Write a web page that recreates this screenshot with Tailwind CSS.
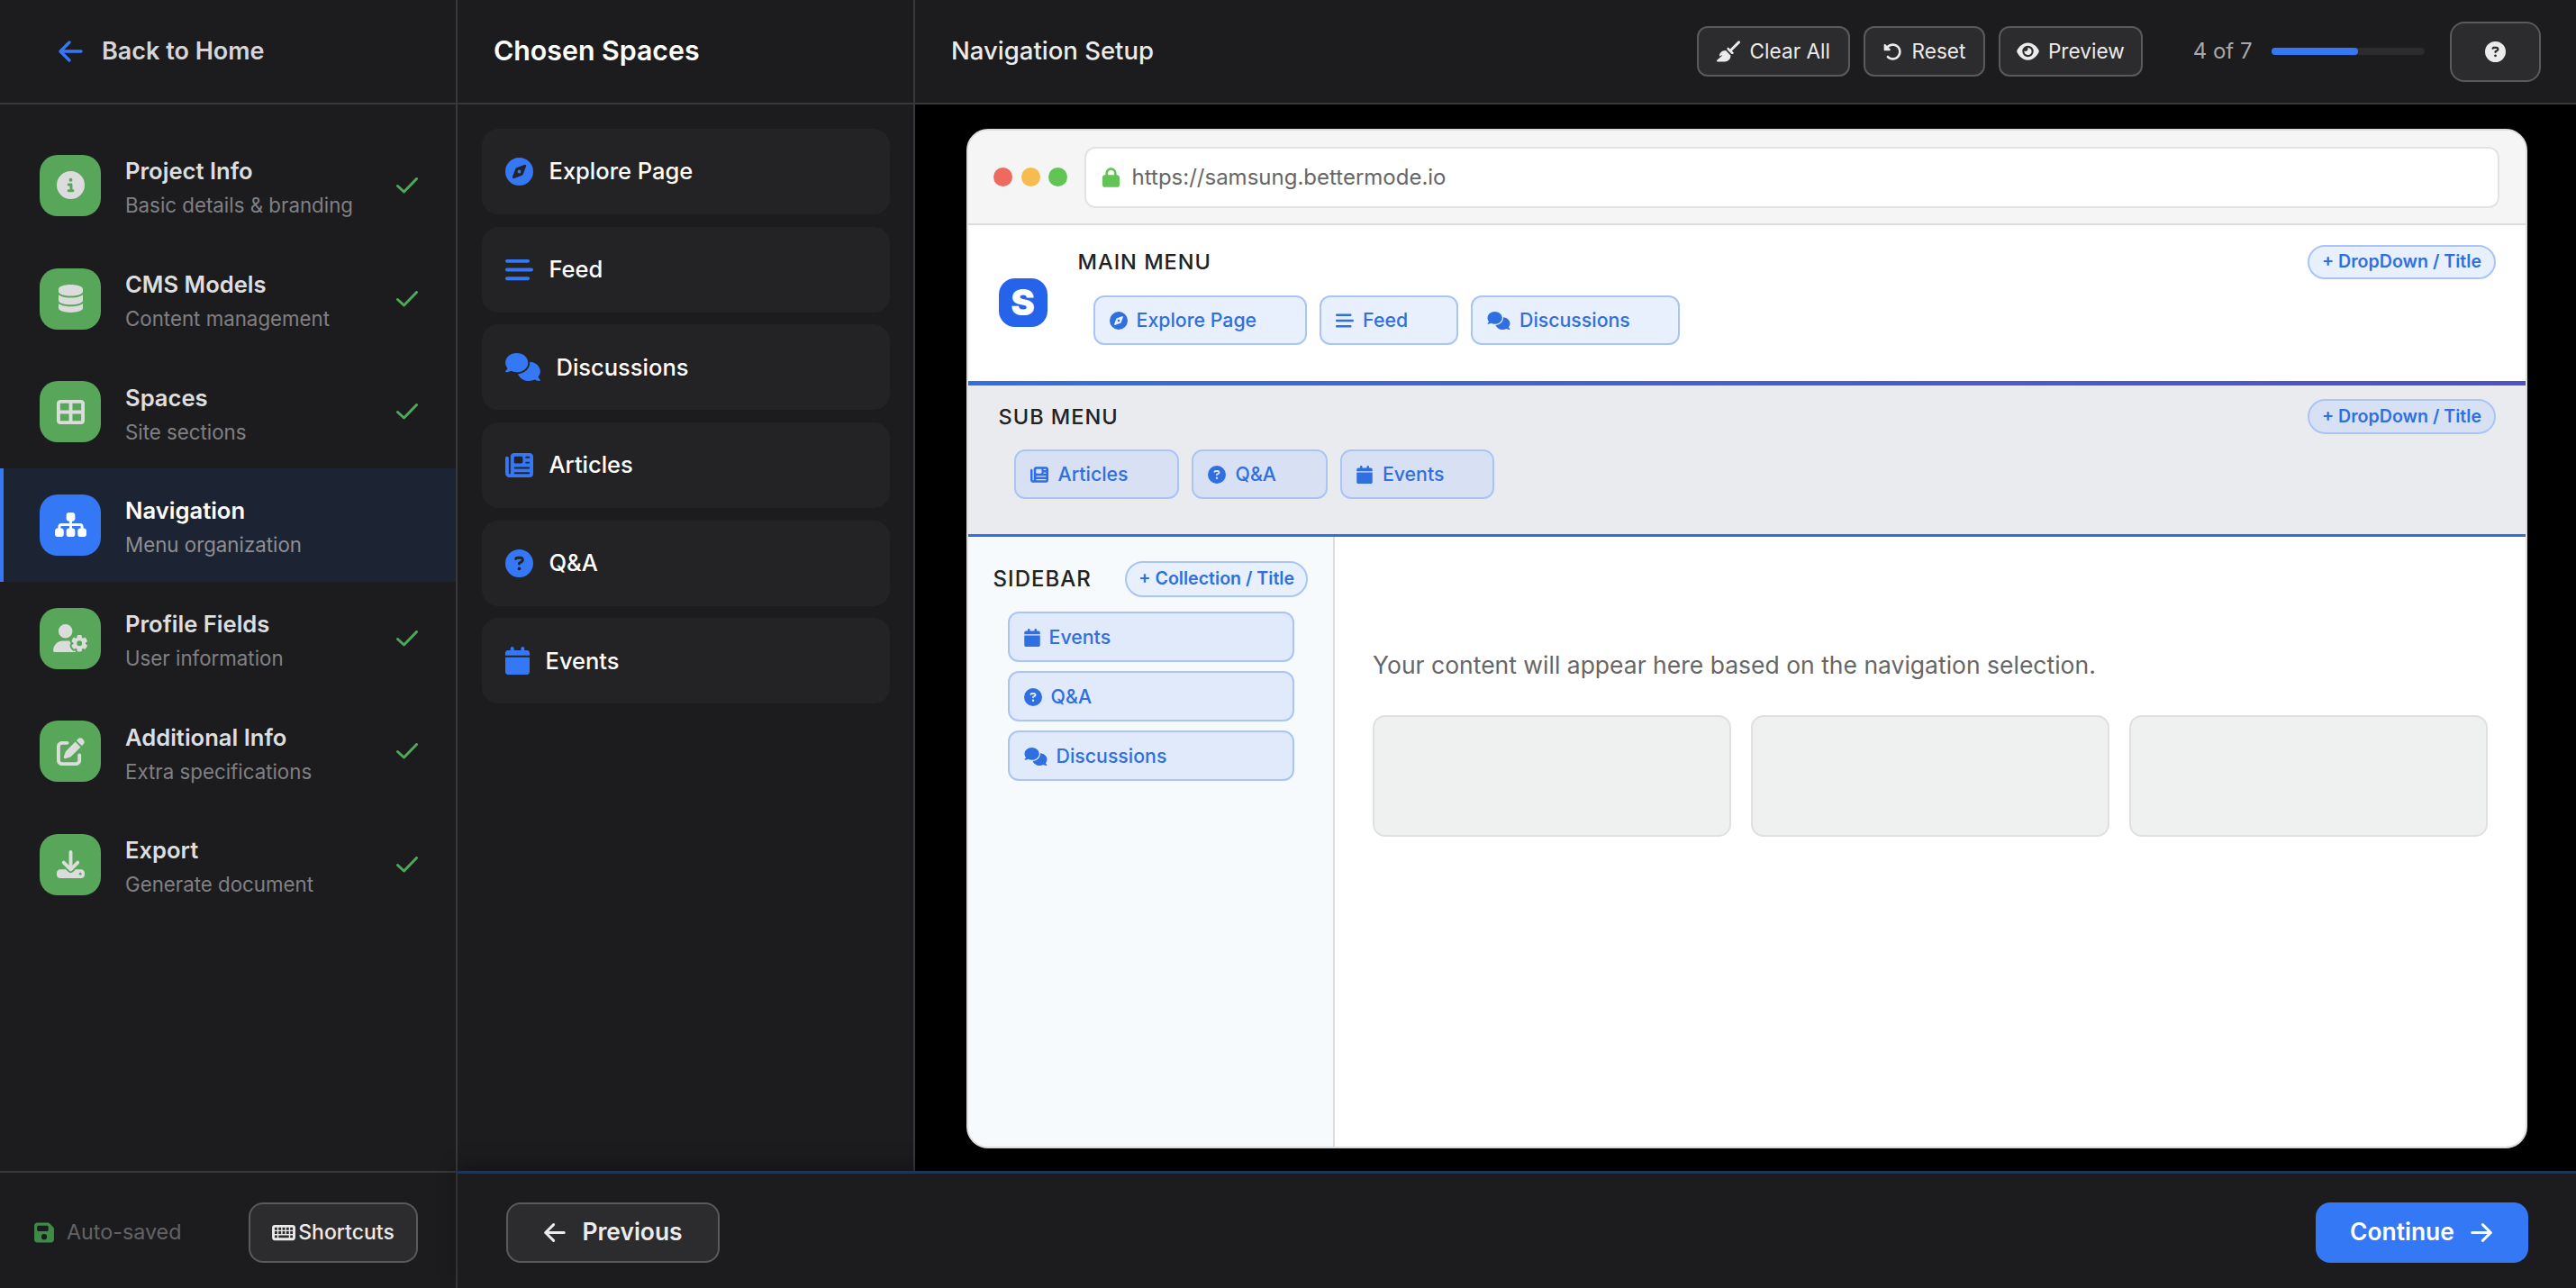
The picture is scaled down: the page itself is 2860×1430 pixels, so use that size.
<!DOCTYPE html>
<html lang="en">
<head>
  <meta charset="UTF-8" />
  <title>Navigation Setup</title>
  <script src="https://cdn.jsdelivr.net/npm/@tailwindcss/browser@4"></script>
</head>
<body class="bg-black font-[Inter,sans-serif] overflow-hidden">
  <!-- icon sprites -->
  <svg class="hidden">
    <symbol id="i-info" viewBox="0 0 512 512"><path d="M256 512A256 256 0 1 0 256 0a256 256 0 1 0 0 512zM216 336h24V272H216c-13.3 0-24-10.7-24-24s10.7-24 24-24h48c13.3 0 24 10.7 24 24v88h8c13.3 0 24 10.7 24 24s-10.7 24-24 24H216c-13.3 0-24-10.7-24-24s10.7-24 24-24zm40-208a32 32 0 1 1 0 64 32 32 0 1 1 0-64z"/></symbol>
    <symbol id="i-database" viewBox="0 0 448 512"><path d="M448 80v48c0 44.2-100.3 80-224 80S0 172.2 0 128V80C0 35.8 100.3 0 224 0S448 35.8 448 80zM393.2 214.7c20.8-7.4 39.9-16.9 54.8-28.6V288c0 44.2-100.3 80-224 80S0 332.2 0 288V186.1c14.9 11.8 34 21.2 54.8 28.6C99.7 230.7 159.5 240 224 240s124.3-9.3 169.2-25.3zM0 346.1c14.9 11.8 34 21.2 54.8 28.6C99.7 390.7 159.5 400 224 400s124.3-9.3 169.2-25.3c20.8-7.4 39.9-16.9 54.8-28.6V432c0 44.2-100.3 80-224 80S0 476.2 0 432V346.1z"/></symbol>
    <symbol id="i-table" viewBox="0 0 512 512"><path d="M448 96V224H288V96H448zm0 192V416H288V288H448zM224 224H64V96H224V224zM64 288H224V416H64V288zM64 32C28.7 32 0 60.7 0 96V416c0 35.3 28.7 64 64 64H448c35.3 0 64-28.7 64-64V96c0-35.3-28.7-64-64-64H64z"/></symbol>
    <symbol id="i-sitemap" viewBox="0 0 576 512"><path d="M208 80c0-26.5 21.5-48 48-48h64c26.5 0 48 21.5 48 48v64c0 26.5-21.5 48-48 48h-8v40H464c30.9 0 56 25.1 56 56v32h8c26.5 0 48 21.5 48 48v64c0 26.5-21.5 48-48 48H464c-26.5 0-48-21.5-48-48V368c0-26.5 21.5-48 48-48h8V288c0-4.4-3.6-8-8-8H312v40h8c26.5 0 48 21.5 48 48v64c0 26.5-21.5 48-48 48H256c-26.5 0-48-21.5-48-48V368c0-26.5 21.5-48 48-48h8V280H112c-4.4 0-8 3.6-8 8v32h8c26.5 0 48 21.5 48 48v64c0 26.5-21.5 48-48 48H48c-26.5 0-48-21.5-48-48V368c0-26.5 21.5-48 48-48h8V288c0-30.9 25.1-56 56-56H264V192h-8c-26.5 0-48-21.5-48-48V80z"/></symbol>
    <symbol id="i-usergear" viewBox="0 0 640 512"><path d="M224 0a128 128 0 1 1 0 256A128 128 0 1 1 224 0zM178.3 304h91.4c11.8 0 23.4 1.2 34.5 3.3c-2.1 18.5 7.4 35.6 21.8 44.8c-16.6 10.6-26.7 31.6-20 53.3c4 12.9 9.4 25.5 16.4 37.6s15.2 23.1 24.4 33c15.7 16.9 39.6 18.4 57.2 8.7v.9c0 9.2 2.7 18.5 7.9 26.3H29.7C13.3 512 0 498.7 0 482.3C0 383.8 79.8 304 178.3 304zM436 218.2c0-7 4.5-13.3 11.3-14.8c10.5-2.4 21.5-3.7 32.7-3.7s22.2 1.3 32.7 3.7c6.8 1.5 11.3 7.8 11.3 14.8v30.6c7.9 3.4 15.4 7.7 22.3 12.8l24.9-14.3c6.1-3.5 13.7-2.7 18.5 2.4c7.6 8.1 14.3 17.2 20.1 27.2s10.3 20.4 13.5 31c2.1 6.7-1.1 13.7-7.2 17.2l-25 14.4c.4 4 .7 8.1 .7 12.3s-.2 8.2-.7 12.3l25 14.4c6.1 3.5 9.2 10.5 7.2 17.2c-3.3 10.6-7.8 21-13.5 31s-12.5 19.1-20.1 27.2c-4.8 5.1-12.5 5.9-18.5 2.4l-24.9-14.3c-6.9 5.1-14.3 9.4-22.3 12.8l0 30.6c0 7-4.5 13.3-11.3 14.8c-10.5 2.4-21.5 3.7-32.7 3.7s-22.2-1.3-32.7-3.7c-6.8-1.5-11.3-7.8-11.3-14.8V454.8c-8-3.4-15.6-7.7-22.5-12.9l-24.7 14.3c-6.1 3.5-13.7 2.7-18.5-2.4c-7.6-8.1-14.3-17.2-20.1-27.2s-10.3-20.4-13.5-31c-2.1-6.7 1.1-13.7 7.2-17.2l24.8-14.3c-.4-4.1-.7-8.2-.7-12.4s.2-8.3 .7-12.4L343.8 325c-6.1-3.5-9.2-10.5-7.2-17.2c3.3-10.6 7.7-21 13.5-31s12.5-19.1 20.1-27.2c4.8-5.1 12.4-5.9 18.5-2.4l24.8 14.3c6.9-5.1 14.5-9.4 22.5-12.9V218.2zm92.1 133.5a48.1 48.1 0 1 0 -96.1 0 48.1 48.1 0 1 0 96.1 0z"/></symbol>
    <symbol id="i-pen" viewBox="0 0 512 512"><path d="M471.6 21.7c-21.9-21.9-57.3-21.9-79.2 0L362.3 51.7l97.9 97.9 30.1-30.1c21.9-21.9 21.9-57.3 0-79.2L471.6 21.7zm-299.2 220c-6.1 6.1-10.8 13.6-13.5 21.9l-29.6 88.8c-2.9 8.6-.6 18.1 5.8 24.6s15.9 8.7 24.6 5.8l88.8-29.6c8.2-2.7 15.7-7.4 21.9-13.5L437.7 172.3 339.7 74.3 172.4 241.7zM96 64C43 64 0 107 0 160V416c0 53 43 96 96 96H352c53 0 96-43 96-96V320c0-17.7-14.3-32-32-32s-32 14.3-32 32v96c0 17.7-14.3 32-32 32H96c-17.7 0-32-14.3-32-32V160c0-17.7 14.3-32 32-32h96c17.7 0 32-14.3 32-32s-14.3-32-32-32H96z"/></symbol>
    <symbol id="i-download" viewBox="0 0 512 512"><path d="M288 32c0-17.7-14.3-32-32-32s-32 14.3-32 32V274.7l-73.4-73.4c-12.5-12.5-32.8-12.5-45.3 0s-12.5 32.8 0 45.3l128 128c12.5 12.5 32.8 12.5 45.3 0l128-128c12.5-12.5 12.5-32.8 0-45.3s-32.8-12.5-45.3 0L288 274.7V32zM64 352c-35.3 0-64 28.7-64 64v32c0 35.3 28.7 64 64 64H448c35.3 0 64-28.7 64-64V416c0-35.3-28.7-64-64-64H346.5l-45.3 45.3c-25 25-65.5 25-90.5 0L165.5 352H64zm368 56a24 24 0 1 1 0 48 24 24 0 1 1 0-48z"/></symbol>
    <symbol id="i-floppy" viewBox="0 0 448 512"><path d="M64 32C28.7 32 0 60.7 0 96V416c0 35.3 28.7 64 64 64H384c35.3 0 64-28.7 64-64V173.3c0-17-6.7-33.3-18.7-45.3L352 50.7C340 38.7 323.7 32 306.7 32H64zm0 96c0-17.7 14.3-32 32-32H288c17.7 0 32 14.3 32 32v64c0 17.7-14.3 32-32 32H96c-17.7 0-32-14.3-32-32V128zM224 288a64 64 0 1 1 0 128 64 64 0 1 1 0-128z"/></symbol>
    <symbol id="i-keyboard" viewBox="0 0 576 512"><path fill-rule="evenodd" d="M64 64C28.7 64 0 92.7 0 128V384c0 35.3 28.7 64 64 64H512c35.3 0 64-28.7 64-64V128c0-35.3-28.7-64-64-64H64zM64 128h64v64H64zM160 128h64v64h-64zM256 128h64v64h-64zM352 128h64v64h-64zM448 128h64v64h-64zM64 224h64v64H64zM160 224h64v64h-64zM256 224h64v64h-64zM352 224h64v64h-64zM448 224h64v64h-64zM64 320h64v64H64zM160 320h256v64H160zM448 320h64v64h-64z"/></symbol>
    <symbol id="i-compass" viewBox="0 0 512 512"><path d="M256 512A256 256 0 1 0 256 0a256 256 0 1 0 0 512zm50.7-186.9L162.4 380.6c-19.4 7.5-38.5-11.6-31-31l55.5-144.3c3.3-8.5 9.9-15.1 18.4-18.4l144.3-55.5c19.4-7.5 38.5 11.6 31 31L325.1 306.7c-3.2 8.5-9.9 15.1-18.4 18.4zM288 256a32 32 0 1 0 -64 0 32 32 0 1 0 64 0z"/></symbol>
    <symbol id="i-bars" viewBox="0 0 512 512"><path d="M0 96C0 78.3 14.3 64 32 64H416c17.7 0 32 14.3 32 32s-14.3 32-32 32H32C14.3 128 0 113.7 0 96zM0 256c0-17.7 14.3-32 32-32H480c17.7 0 32 14.3 32 32s-14.3 32-32 32H32c-17.7 0-32-14.3-32-32zM448 416c0 17.7-14.3 32-32 32H32c-17.7 0-32-14.3-32-32s14.3-32 32-32H416c17.7 0 32 14.3 32 32z"/></symbol>
    <symbol id="i-comments" viewBox="0 0 640 512"><path d="M208 352c114.9 0 208-78.8 208-176S322.9 0 208 0S0 78.8 0 176c0 38.6 14.7 74.3 39.6 103.4c-3.5 9.4-8.7 17.7-14.2 24.7c-4.8 6.2-9.7 11-13.3 14.3c-1.8 1.6-3.3 2.9-4.3 3.7c-.5 .4-.9 .7-1.1 .8l-.2 .2 0 0 0 0C1 327.2-1.4 334.4 .8 340.9S9.1 352 16 352c21.8 0 43.8-5.6 62.1-12.5c9.2-3.5 17.8-7.4 25.3-11.4C134.1 343.3 169.8 352 208 352zM448 176c0 112.3-99.1 196.9-216.5 207C255.8 457.4 336.4 512 432 512c38.2 0 73.9-8.7 104.7-23.9c7.5 4 16 7.9 25.2 11.4c18.3 6.9 40.3 12.5 62.1 12.5c6.9 0 13.1-4.5 15.2-11.1c2.1-6.6-.2-13.8-5.8-17.9l0 0 0 0-.2-.2c-.2-.2-.6-.4-1.1-.8c-1-.8-2.5-2-4.3-3.7c-3.6-3.3-8.5-8.1-13.3-14.3c-5.5-7-10.7-15.4-14.2-24.7c24.9-29 39.6-64.7 39.6-103.4c0-92.8-84.9-168.9-192.6-175.5c.4 5.1 .6 10.3 .6 15.5z"/></symbol>
    <symbol id="i-news" viewBox="0 0 512 512"><path d="M96 96c0-35.3 28.7-64 64-64H448c35.3 0 64 28.7 64 64V416c0 35.3-28.7 64-64 64H80c-44.2 0-80-35.8-80-80V128c0-17.7 14.3-32 32-32s32 14.3 32 32V400c0 8.8 7.2 16 16 16s16-7.2 16-16V96zm64 24v80c0 13.3 10.7 24 24 24H296c13.3 0 24-10.7 24-24V120c0-13.3-10.7-24-24-24H184c-13.3 0-24 10.7-24 24zm208-8c0 8.8 7.2 16 16 16h48c8.8 0 16-7.2 16-16s-7.2-16-16-16H384c-8.8 0-16 7.2-16 16zm0 96c0 8.8 7.2 16 16 16h48c8.8 0 16-7.2 16-16s-7.2-16-16-16H384c-8.8 0-16 7.2-16 16zM160 304c0 8.8 7.2 16 16 16H432c8.8 0 16-7.2 16-16s-7.2-16-16-16H176c-8.8 0-16 7.2-16 16zm0 96c0 8.8 7.2 16 16 16H432c8.8 0 16-7.2 16-16s-7.2-16-16-16H176c-8.8 0-16 7.2-16 16z"/></symbol>
    <symbol id="i-question" viewBox="0 0 512 512"><path d="M256 512A256 256 0 1 0 256 0a256 256 0 1 0 0 512zM169.8 165.3c7.9-22.3 29.1-37.3 52.8-37.3h58.3c34.9 0 63.1 28.3 63.1 63.1c0 22.6-12.1 43.5-31.7 54.8L280 264.4c-.2 13-10.9 23.6-24 23.6c-13.3 0-24-10.7-24-24V250.5c0-8.6 4.6-16.5 12.1-20.8l44.3-25.4c4.7-2.7 7.6-7.7 7.6-13.1c0-8.4-6.8-15.1-15.1-15.1H222.6c-3.4 0-6.4 2.1-7.5 5.3l-.4 1.2c-4.4 12.5-18.2 19-30.6 14.6s-19-18.2-14.6-30.6l.4-1.2zM224 352a32 32 0 1 1 64 0 32 32 0 1 1 -64 0z"/></symbol>
    <symbol id="i-calendar" viewBox="0 0 448 512"><path d="M96 32V64H48C21.5 64 0 85.5 0 112v48H448V112c0-26.5-21.5-48-48-48H352V32c0-17.7-14.3-32-32-32s-32 14.3-32 32V64H160V32c0-17.7-14.3-32-32-32S96 14.3 96 32zM448 192H0V464c0 26.5 21.5 48 48 48H400c26.5 0 48-21.5 48-48V192z"/></symbol>
    <symbol id="i-broom" viewBox="0 0 576 512"><path d="M566.6 54.6c12.5-12.5 12.5-32.8 0-45.3s-32.8-12.5-45.3 0l-192 192-34.7-34.7c-4.2-4.2-10-6.6-16-6.6c-12.5 0-22.6 10.1-22.6 22.6v29.1L364.3 320h29.1c12.5 0 22.6-10.1 22.6-22.6c0-6-2.4-11.8-6.6-16l-34.7-34.7 192-192zM341.1 353.4L222.6 234.9c-42.7-3.7-85.2 11.7-115.8 42.3l-8 8C76.5 307.5 64 337.7 64 369.2c0 6.8 7.1 11.2 13.2 8.2l51.1-25.5c5-2.5 9.5 4.1 5.4 7.9L7.3 473.4C2.7 477.6 0 483.6 0 489.9C0 502.1 9.9 512 22.1 512l173.3 0c38.8 0 75.9-15.4 103.4-42.8c30.6-30.6 45.9-73.1 42.3-115.8z"/></symbol>
    <symbol id="i-undo" viewBox="0 0 512 512"><path d="M48.5 224H40c-13.3 0-24-10.7-24-24V72c0-9.7 5.8-18.5 14.8-22.2s19.3-1.7 26.2 5.2L98.6 96.6c87.6-86.5 228.7-86.2 315.8 1c87.5 87.5 87.5 229.3 0 316.8s-229.3 87.5-316.8 0c-12.5-12.5-12.5-32.8 0-45.3s32.8-12.5 45.3 0c62.5 62.5 163.8 62.5 226.3 0s62.5-163.8 0-226.3c-62.2-62.2-162.7-62.5-225.3-1L185 183c6.9 6.9 8.9 17.2 5.2 26.2s-12.5 14.8-22.2 14.8H48.5z"/></symbol>
    <symbol id="i-eye" viewBox="0 0 576 512"><path d="M288 32c-80.8 0-145.5 36.8-192.6 80.6C48.6 156 17.3 208 2.5 243.7c-3.3 7.9-3.3 16.7 0 24.6C17.3 304 48.6 356 95.4 399.4C142.5 443.2 207.2 480 288 480s145.5-36.8 192.6-80.6c46.8-43.5 78.1-95.4 93-131.1c3.3-7.9 3.3-16.7 0-24.6c-14.9-35.7-46.2-87.7-93-131.1C433.5 68.8 368.8 32 288 32zM144 256a144 144 0 1 1 288 0 144 144 0 1 1 -288 0zm144-64c0 35.3-28.7 64-64 64c-7.1 0-13.9-1.2-20.3-3.3c-5.5-1.8-11.9 1.6-11.7 7.4c.3 6.9 1.3 13.8 3.2 20.7c13.7 51.2 66.4 81.6 117.6 67.9s81.6-66.4 67.9-117.6c-11.1-41.5-47.8-69.4-88.6-71.1c-5.8-.2-9.2 6.1-7.4 11.7c2.1 6.4 3.3 13.2 3.3 20.3z"/></symbol>
    <symbol id="i-lock" viewBox="0 0 448 512"><path d="M144 144v48H304V144c0-44.2-35.8-80-80-80s-80 35.8-80 80zM80 192V144C80 64.5 144.5 0 224 0s144 64.5 144 144v48h16c35.3 0 64 28.7 64 64V448c0 35.3-28.7 64-64 64H64c-35.3 0-64-28.7-64-64V256c0-35.3 28.7-64 64-64H80z"/></symbol>
    <symbol id="i-left" viewBox="0 0 28 28"><path d="M26 14H3M13 4 3 14l10 10" fill="none" stroke="currentColor" stroke-width="3.4" stroke-linecap="round" stroke-linejoin="round"/></symbol>
    <symbol id="i-right" viewBox="0 0 28 28"><path d="M2 14h23M15 4l10 10-10 10" fill="none" stroke="currentColor" stroke-width="3.4" stroke-linecap="round" stroke-linejoin="round"/></symbol>
    <symbol id="i-check" viewBox="0 0 24 18"><path d="M1.500 9.500 8.500 16 22.500 1.500" fill="none" stroke="currentColor" stroke-width="3" stroke-linecap="round" stroke-linejoin="round"/></symbol>
  </svg>

  <div class="flex h-[1430px] w-[2860px]">
    <!-- steps sidebar -->
    <aside class="w-[508px] shrink-0 flex flex-col bg-[#1c1c1e] border-r-2 border-[#38383a]">
      <div class="h-[116px] shrink-0 flex items-center gap-[21px] pl-[64px] border-b-2 border-[#38383a]">
        <svg class="w-[28px] h-[28px] text-[#3478f6] fill-current"><use href="#i-left"/></svg>
        <span class="text-[27px] font-semibold text-[#d6d6d8]">Back to Home</span>
      </div>
      <nav class="flex-1 pt-[27px]">
        <div class="h-[125.700px] flex items-center pl-[44px] pr-[42px]">
          <div class="w-[68px] h-[68px] rounded-[20px] bg-[#58a65a] flex items-center justify-center text-[#dcdcdc]"><svg class="w-[31px] h-[31px] fill-current"><use href="#i-info"/></svg></div>
          <div class="ml-[27px] flex-1 pt-[6px]">
            <div class="text-[25.600px] leading-[34px] font-semibold text-[#dedede]">Project Info</div>
            <div class="text-[22.300px] leading-[32px] mt-[5px] text-[#808084]">Basic details &amp; branding</div>
          </div>
          <svg class="w-[24px] h-[18px] text-[#4ea85a]"><use href="#i-check"/></svg>
        </div>
        <div class="h-[125.700px] flex items-center pl-[44px] pr-[42px]">
          <div class="w-[68px] h-[68px] rounded-[20px] bg-[#58a65a] flex items-center justify-center text-[#dcdcdc]"><svg class="w-[27px] h-[31px] fill-current"><use href="#i-database"/></svg></div>
          <div class="ml-[27px] flex-1 pt-[6px]">
            <div class="text-[25.600px] leading-[34px] font-semibold text-[#dedede]">CMS Models</div>
            <div class="text-[22.300px] leading-[32px] mt-[5px] text-[#808084]">Content management</div>
          </div>
          <svg class="w-[24px] h-[18px] text-[#4ea85a]"><use href="#i-check"/></svg>
        </div>
        <div class="h-[125.700px] flex items-center pl-[44px] pr-[42px]">
          <div class="w-[68px] h-[68px] rounded-[20px] bg-[#58a65a] flex items-center justify-center text-[#dcdcdc]"><svg class="w-[31px] h-[31px] fill-current"><use href="#i-table"/></svg></div>
          <div class="ml-[27px] flex-1 pt-[6px]">
            <div class="text-[25.600px] leading-[34px] font-semibold text-[#dedede]">Spaces</div>
            <div class="text-[22.300px] leading-[32px] mt-[5px] text-[#808084]">Site sections</div>
          </div>
          <svg class="w-[24px] h-[18px] text-[#4ea85a]"><use href="#i-check"/></svg>
        </div>
        <div class="h-[125.700px] flex items-center pl-[40px] pr-[42px] bg-[#1c2433] border-l-4 border-[#3478f6]">
          <div class="w-[68px] h-[68px] rounded-[20px] bg-[#3478f6] flex items-center justify-center text-white"><svg class="w-[35px] h-[31px] fill-current"><use href="#i-sitemap"/></svg></div>
          <div class="ml-[27px] flex-1 pt-[6px]">
            <div class="text-[25.600px] leading-[34px] font-semibold text-white">Navigation</div>
            <div class="text-[22.300px] leading-[32px] mt-[5px] text-[#8e8e93]">Menu organization</div>
          </div>
        </div>
        <div class="h-[125.700px] flex items-center pl-[44px] pr-[42px]">
          <div class="w-[68px] h-[68px] rounded-[20px] bg-[#58a65a] flex items-center justify-center text-[#dcdcdc]"><svg class="w-[39px] h-[31px] fill-current"><use href="#i-usergear"/></svg></div>
          <div class="ml-[27px] flex-1 pt-[6px]">
            <div class="text-[25.600px] leading-[34px] font-semibold text-[#dedede]">Profile Fields</div>
            <div class="text-[22.300px] leading-[32px] mt-[5px] text-[#808084]">User information</div>
          </div>
          <svg class="w-[24px] h-[18px] text-[#4ea85a]"><use href="#i-check"/></svg>
        </div>
        <div class="h-[125.700px] flex items-center pl-[44px] pr-[42px]">
          <div class="w-[68px] h-[68px] rounded-[20px] bg-[#58a65a] flex items-center justify-center text-[#dcdcdc]"><svg class="w-[31px] h-[31px] fill-current"><use href="#i-pen"/></svg></div>
          <div class="ml-[27px] flex-1 pt-[6px]">
            <div class="text-[25.600px] leading-[34px] font-semibold text-[#dedede]">Additional Info</div>
            <div class="text-[22.300px] leading-[32px] mt-[5px] text-[#808084]">Extra specifications</div>
          </div>
          <svg class="w-[24px] h-[18px] text-[#4ea85a]"><use href="#i-check"/></svg>
        </div>
        <div class="h-[125.700px] flex items-center pl-[44px] pr-[42px]">
          <div class="w-[68px] h-[68px] rounded-[20px] bg-[#58a65a] flex items-center justify-center text-[#dcdcdc]"><svg class="w-[31px] h-[31px] fill-current"><use href="#i-download"/></svg></div>
          <div class="ml-[27px] flex-1 pt-[6px]">
            <div class="text-[25.600px] leading-[34px] font-semibold text-[#dedede]">Export</div>
            <div class="text-[22.300px] leading-[32px] mt-[5px] text-[#808084]">Generate document</div>
          </div>
          <svg class="w-[24px] h-[18px] text-[#4ea85a]"><use href="#i-check"/></svg>
        </div>
      </nav>
      <div class="h-[130px] shrink-0 flex items-center pt-[4px] pl-[38px] pr-[42px] border-t-2 border-[#38383a]">
        <svg class="w-[22px] h-[25px] text-[#3f8a46] fill-current"><use href="#i-floppy"/></svg>
        <span class="ml-[14px] text-[23.300px] text-[#636366]">Auto-saved</span>
        <button class="ml-auto w-[188px] h-[67px] flex items-center justify-center gap-[3px] rounded-[16px] bg-[#2c2c2e] border-2 border-[#5a5a5e] text-[23px] font-medium text-[#ebebeb]">
          <svg class="w-[26px] h-[23px] fill-current"><use href="#i-keyboard"/></svg>Shortcuts
        </button>
      </div>
    </aside>

    <div class="flex-1 flex flex-col min-w-0">
      <div class="flex-1 flex min-h-0">
        <!-- chosen spaces -->
        <section class="w-[508px] shrink-0 flex flex-col bg-[#1c1c1e] border-r-2 border-[#38383a]">
          <div class="h-[116px] shrink-0 flex items-center pl-[40px] border-b-2 border-[#38383a]">
            <h2 class="text-[30.300px] font-semibold text-white">Chosen Spaces</h2>
          </div>
          <div class="flex flex-col gap-[13.700px] pt-[27px] px-[26.500px]">
            <div class="h-[95px] flex items-center gap-[18px] px-[26px] rounded-[18px] bg-[#232326] text-[25.500px] font-medium text-white"><svg class="w-[31px] h-[31px] text-[#3478f6] fill-current"><use href="#i-compass"/></svg>Explore Page</div>
            <div class="h-[95px] flex items-center gap-[18px] px-[26px] rounded-[18px] bg-[#232326] text-[25.500px] font-medium text-white"><svg class="w-[31px] h-[31px] text-[#3478f6] fill-current"><use href="#i-bars"/></svg>Feed</div>
            <div class="h-[95px] flex items-center gap-[18px] px-[26px] rounded-[18px] bg-[#232326] text-[25.500px] font-medium text-white"><svg class="w-[39px] h-[31px] text-[#3478f6] fill-current"><use href="#i-comments"/></svg>Discussions</div>
            <div class="h-[95px] flex items-center gap-[18px] px-[26px] rounded-[18px] bg-[#232326] text-[25.500px] font-medium text-white"><svg class="w-[31px] h-[31px] text-[#3478f6] fill-current"><use href="#i-news"/></svg>Articles</div>
            <div class="h-[95px] flex items-center gap-[18px] px-[26px] rounded-[18px] bg-[#232326] text-[25.500px] font-medium text-white"><svg class="w-[31px] h-[31px] text-[#3478f6] fill-current"><use href="#i-question"/></svg>Q&amp;A</div>
            <div class="h-[95px] flex items-center gap-[18px] px-[26px] rounded-[18px] bg-[#232326] text-[25.500px] font-medium text-white"><svg class="w-[27px] h-[31px] text-[#3478f6] fill-current"><use href="#i-calendar"/></svg>Events</div>
          </div>
        </section>

        <main class="flex-1 flex flex-col min-w-0">
          <header class="h-[116px] shrink-0 flex items-center pl-[40px] pr-[39.500px] bg-[#1c1c1e] border-b-2 border-[#38383a]">
            <h1 class="text-[27.500px] font-medium text-[#ebebeb]">Navigation Setup</h1>
            <div class="ml-auto flex items-center gap-[15px]">
              <button class="h-[56px] flex items-center gap-[11px] px-[20px] rounded-[12px] bg-[#2c2c2e] border-2 border-[#5a5a5e] text-[22.600px] text-[#ebebeb]"><svg class="w-[26px] h-[24px] fill-current"><use href="#i-broom"/></svg>Clear All</button>
              <button class="h-[56px] flex items-center gap-[11px] px-[19.500px] rounded-[12px] bg-[#2c2c2e] border-2 border-[#5a5a5e] text-[22.600px] text-[#ebebeb]"><svg class="w-[21px] h-[21px] fill-current"><use href="#i-undo"/></svg>Reset</button>
              <button class="h-[56px] flex items-center gap-[10px] px-[18px] rounded-[12px] bg-[#2c2c2e] border-2 border-[#5a5a5e] text-[22.600px] text-[#ebebeb]"><svg class="w-[25px] h-[22px] fill-current"><use href="#i-eye"/></svg>Preview</button>
            </div>
            <span class="ml-[56px] text-[24px] text-[#a8a8ac]">4 of 7</span>
            <div class="ml-[21px] w-[170px] h-[8px] rounded-full bg-[#2c2c2e]">
              <div class="h-full w-[57%] rounded-full bg-[#3478f6]"></div>
            </div>
            <button class="ml-[28px] w-[101px] h-[67px] flex items-center justify-center rounded-[16px] bg-[#2c2c2e] border-2 border-[#5a5a5e] text-[#ebebeb]"><svg class="w-[23px] h-[23px] fill-current"><use href="#i-question"/></svg></button>
          </header>

          <div class="flex-1 min-h-0 pl-[56.600px] pr-[54px] pt-[27px] pb-[25px] bg-black">
            <!-- browser preview -->
            <div class="h-full rounded-[24px] overflow-hidden bg-white border-2 border-[#dcdcdc] flex flex-col">
              <div class="h-[105px] shrink-0 flex items-center gap-[9.500px] pl-[28.500px] pr-[29px] bg-[#f5f5f5] border-b-2 border-[#dddddd]">
                <span class="w-[21px] h-[21px] rounded-full bg-[#ed6a5e]"></span>
                <span class="w-[21px] h-[21px] rounded-full bg-[#f5bd4f]"></span>
                <span class="w-[21px] h-[21px] rounded-full bg-[#61c454]"></span>
                <div class="ml-[9px] flex-1 h-[68px] flex items-center gap-[14px] pl-[18px] bg-white border-2 border-[#e3e3e3] rounded-[12px]">
                  <svg class="w-[19px] h-[22px] text-[#61c454] fill-current"><use href="#i-lock"/></svg>
                  <span class="text-[24px] text-[#666666]">https://samsung.bettermode.io</span>
                </div>
              </div>

              <div class="h-[173px] shrink-0 flex items-start gap-[34px] pl-[34px] pr-[33px] pt-[22px]">
                <div class="mt-[37px] w-[54px] h-[54px] shrink-0 rounded-[18px] bg-[#2563eb] flex items-center justify-center text-[40px] leading-none font-black text-white">S</div>
                <div class="flex-1">
                  <div class="flex items-center justify-between">
                    <span class="text-[23.500px] font-medium tracking-[1px] text-[#222222]">MAIN MENU</span>
                    <button class="h-[38px] px-[14px] rounded-full bg-[#e8f0fd] border-2 border-[#a9c5f5] text-[19.600px] font-semibold text-[#2f6fe0]">+ DropDown / Title</button>
                  </div>
                  <div class="mt-[18px] ml-[17px] flex gap-[14px]">
                    <div class="h-[55px] flex items-center gap-[10px] pt-[1.500px] pl-[16px] pr-[54px] rounded-[12px] bg-[#e8f0fd] border-2 border-[#a9c5f5] text-[21.300px] font-medium text-[#2f6fe0]"><svg class="w-[20px] h-[20px] fill-current"><use href="#i-compass"/></svg>Explore Page</div>
                    <div class="h-[55px] flex items-center gap-[10px] pt-[1.500px] pl-[16px] pr-[54px] rounded-[12px] bg-[#e8f0fd] border-2 border-[#a9c5f5] text-[21.300px] font-medium text-[#2f6fe0]"><svg class="w-[20px] h-[20px] fill-current"><use href="#i-bars"/></svg>Feed</div>
                    <div class="h-[55px] flex items-center gap-[10px] pt-[1.500px] pl-[16px] pr-[53px] rounded-[12px] bg-[#e8f0fd] border-2 border-[#a9c5f5] text-[21.300px] font-medium text-[#2f6fe0]"><svg class="w-[26px] h-[20px] fill-current"><use href="#i-comments"/></svg>Discussions</div>
                  </div>
                </div>
              </div>

              <div class="h-[5px] shrink-0 bg-gradient-to-r from-[#2f6fe0] to-[#5050c8]"></div>

              <div class="h-[165px] shrink-0 pl-[34px] pr-[33px] pt-[15px] bg-[#e9ebef]">
                <div class="flex items-center justify-between">
                  <span class="text-[23.500px] font-medium tracking-[1px] text-[#222222]">SUB MENU</span>
                  <button class="h-[39px] px-[14px] rounded-full bg-[#d8e1f4] border-2 border-[#a9c5f5] text-[19.600px] font-semibold text-[#2f6fe0]">+ DropDown / Title</button>
                </div>
                <div class="mt-[17px] ml-[17px] flex gap-[14px]">
                  <div class="h-[55px] flex items-center gap-[11px] pt-[1.500px] pl-[16px] pr-[54px] rounded-[12px] bg-[#d8e1f4] border-2 border-[#a9c5f5] text-[21.300px] font-medium text-[#2f6fe0]"><svg class="w-[20px] h-[20px] fill-current"><use href="#i-news"/></svg>Articles</div>
                  <div class="h-[55px] flex items-center gap-[11px] pt-[1.500px] pl-[16px] pr-[55px] rounded-[12px] bg-[#d8e1f4] border-2 border-[#a9c5f5] text-[21.300px] font-medium text-[#2f6fe0]"><svg class="w-[20px] h-[20px] fill-current"><use href="#i-question"/></svg>Q&amp;A</div>
                  <div class="h-[55px] flex items-center gap-[11px] pt-[1.500px] pl-[16px] pr-[54px] rounded-[12px] bg-[#d8e1f4] border-2 border-[#a9c5f5] text-[21.300px] font-medium text-[#2f6fe0]"><svg class="w-[18px] h-[20px] fill-current"><use href="#i-calendar"/></svg>Events</div>
                </div>
              </div>

              <div class="flex-1 min-h-0 flex border-t-[3px] border-[#2f6fe0]">
                <div class="w-[407.500px] shrink-0 pt-[27px] pl-[28px] pr-[28px] bg-[#f7fafc] border-r-2 border-[#dddddd]">
                  <div class="flex items-center justify-between">
                    <span class="text-[24px] font-medium tracking-[1px] text-[#222222]">SIDEBAR</span>
                    <button class="h-[40px] px-[13px] rounded-full bg-[#e8f0fd] border-2 border-[#a9c5f5] text-[19.600px] font-semibold text-[#2f6fe0]">+ Collection / Title</button>
                  </div>
                  <div class="mt-[16px] ml-[16px] mr-[15px] flex flex-col gap-[10px]">
                    <div class="h-[56px] flex items-center gap-[10px] pt-[1.500px] pl-[16px] rounded-[12px] bg-[#e1eafb] border-2 border-[#a9c5f5] text-[21.300px] font-medium text-[#2f6fe0]"><svg class="w-[18px] h-[20px] fill-current"><use href="#i-calendar"/></svg>Events</div>
                    <div class="h-[56px] flex items-center gap-[10px] pt-[1.500px] pl-[16px] rounded-[12px] bg-[#e1eafb] border-2 border-[#a9c5f5] text-[21.300px] font-medium text-[#2f6fe0]"><svg class="w-[20px] h-[20px] fill-current"><use href="#i-question"/></svg>Q&amp;A</div>
                    <div class="h-[56px] flex items-center gap-[10px] pt-[1.500px] pl-[16px] rounded-[12px] bg-[#e1eafb] border-2 border-[#a9c5f5] text-[21.300px] font-medium text-[#2f6fe0]"><svg class="w-[26px] h-[20px] fill-current"><use href="#i-comments"/></svg>Discussions</div>
                  </div>
                </div>
                <div class="flex-1 pl-[42px] pr-[42px] pt-[125px]">
                  <p class="text-[26.500px] leading-[34px] text-[#666666]">Your content will appear here based on the navigation selection.</p>
                  <div class="mt-[39px] grid grid-cols-3 gap-[22px]">
                    <div class="h-[135px] rounded-[14px] bg-[#eff0f0] border-2 border-[#e0e0e0]"></div>
                    <div class="h-[135px] rounded-[14px] bg-[#eff0f0] border-2 border-[#e0e0e0]"></div>
                    <div class="h-[135px] rounded-[14px] bg-[#eff0f0] border-2 border-[#e0e0e0]"></div>
                  </div>
                </div>
              </div>
            </div>
          </div>
        </main>
      </div>

      <footer class="h-[130px] shrink-0 flex items-center justify-between pt-[3px] pl-[54px] pr-[53px] bg-[#1c1c1e] border-t-[3px] border-[#1d3557] shadow-[0_-8px_20px_rgba(0,0,0,0.25)] relative">
        <button class="w-[237px] h-[67px] flex items-center justify-center gap-[18px] rounded-[16px] bg-[#2c2c2e] border-2 border-[#5a5a5e] text-[26.400px] font-semibold text-[#ebebeb]"><svg class="w-[25px] h-[25px]"><use href="#i-left"/></svg>Previous</button>
        <button class="w-[236px] h-[67px] flex items-center justify-center gap-[17px] rounded-[16px] bg-[#3478f6] text-[26.400px] font-semibold text-white"><svg class="order-last w-[27px] h-[25px]"><use href="#i-right"/></svg>Continue</button>
      </footer>
    </div>
  </div>
</body>
</html>
